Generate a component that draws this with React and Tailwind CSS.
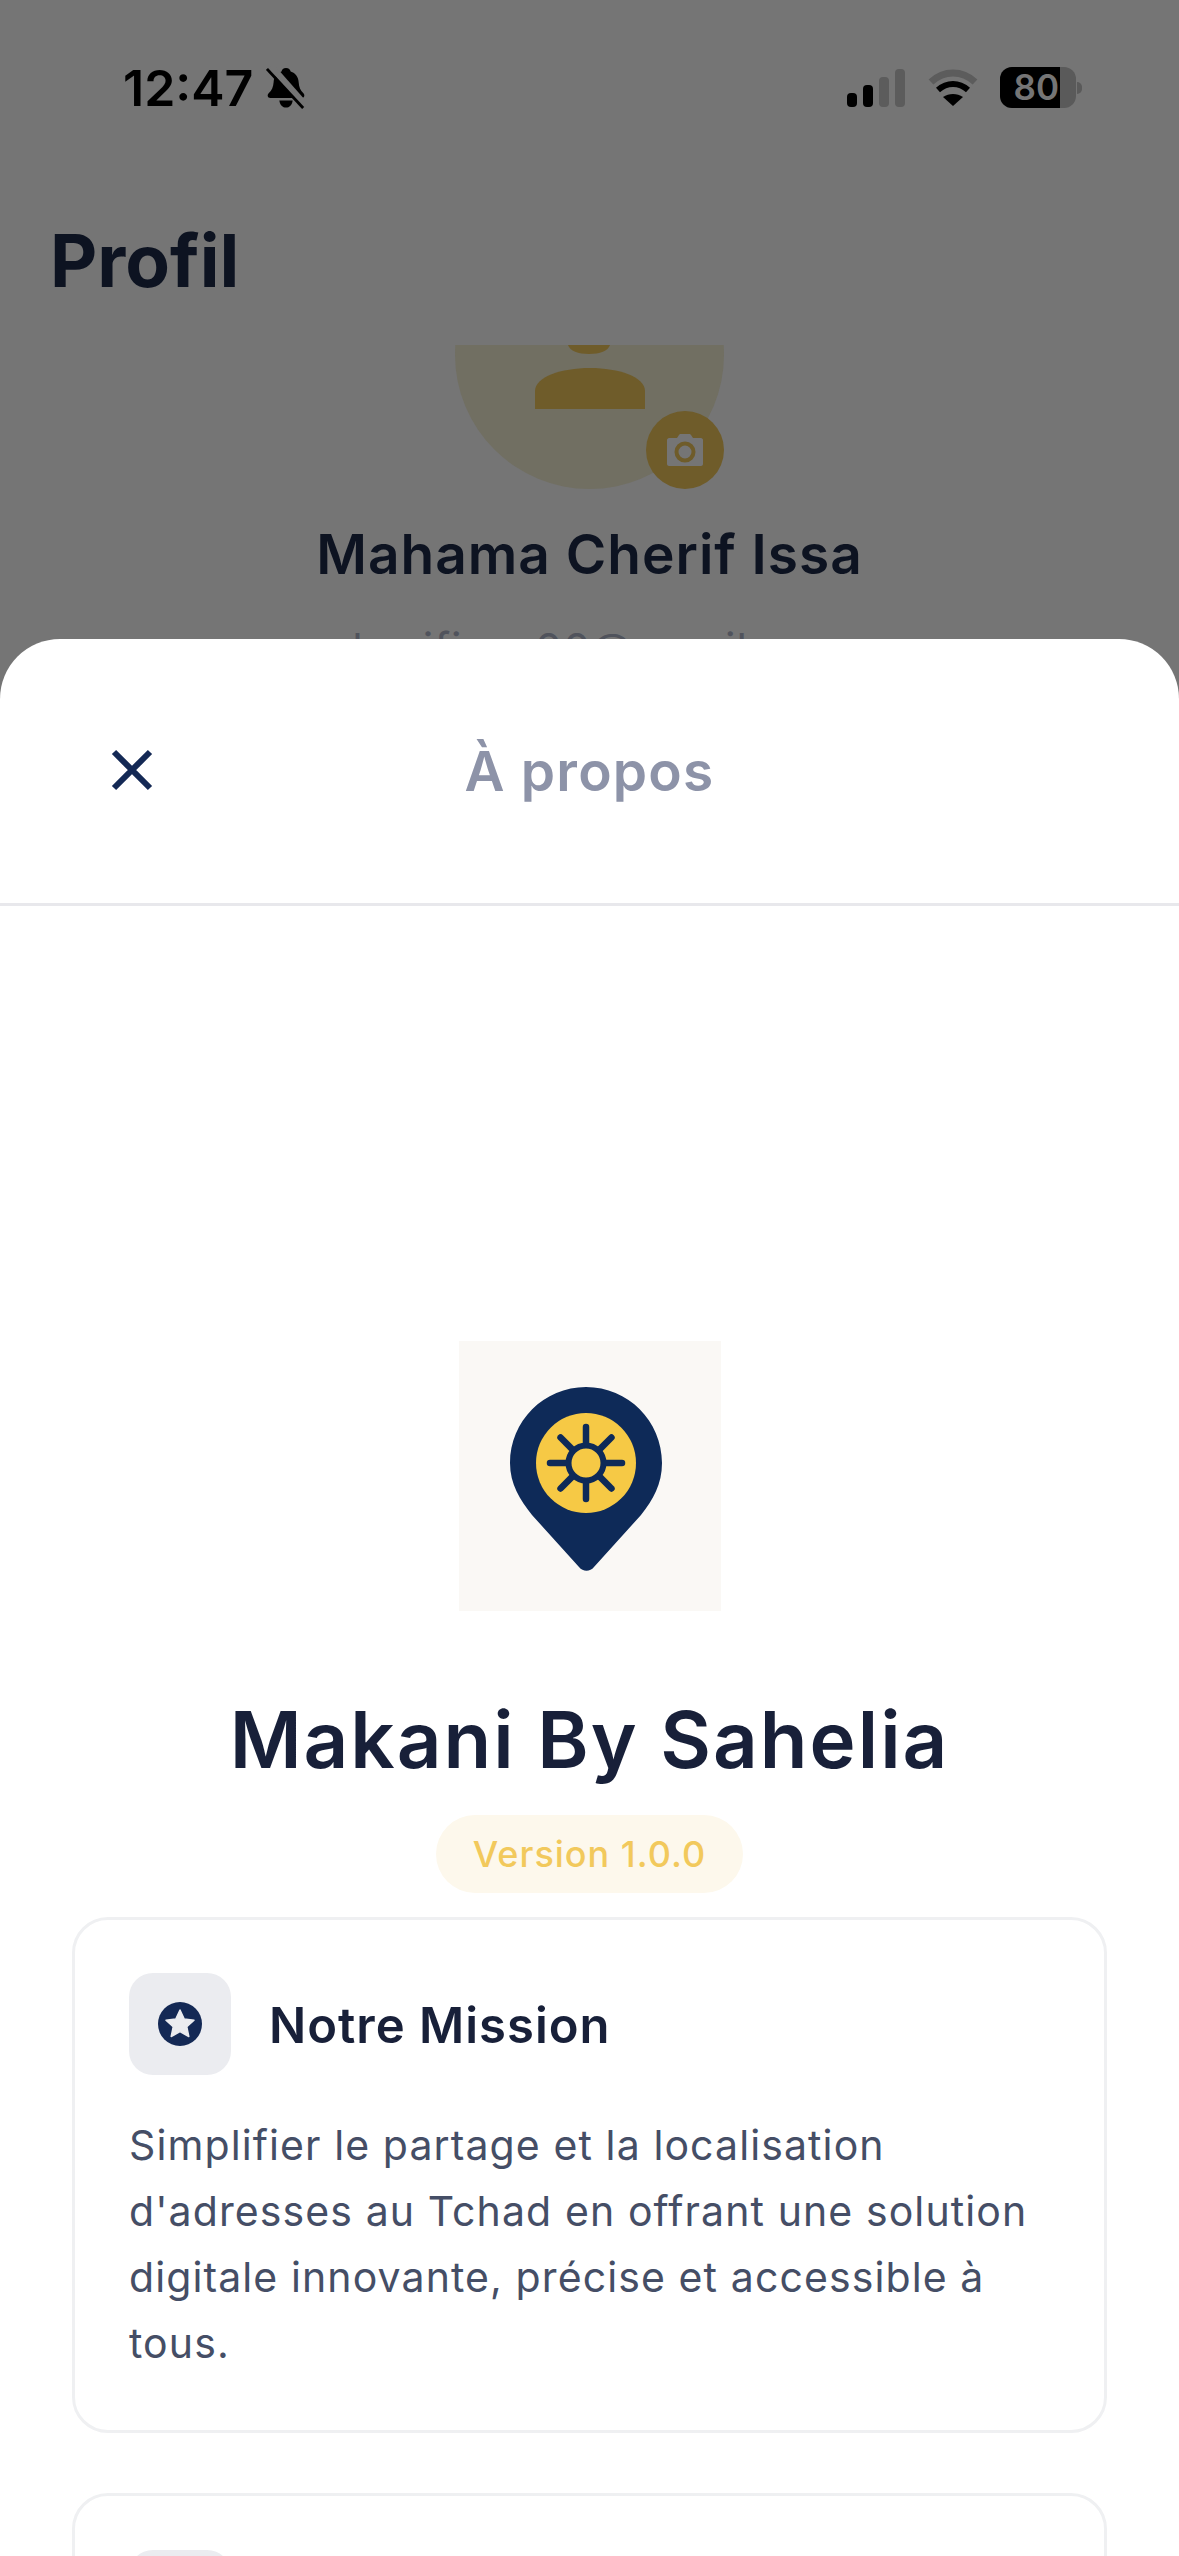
const FONT = { fontFamily: 'Inter, "Liberation Sans", sans-serif' };

function BellOff() {
  return (
    <svg width="40" height="44" viewBox="0 0 42 44" className="shrink-0">
      <path d="M21 1c2.800 0 4.500 1.800 4.900 3.800 5.200 1.600 8 5.800 8.400 11.200.3 5 1.700 8.600 5 11.400 1.800 1.600 1 5-1.700 5H4.500c-2.800 0-3.600-3.400-1.700-5 3.400-2.800 4.800-6.400 5.200-11.400.4-5.400 3.200-9.600 8.300-11.200C16.600 2.800 18.200 1 21 1z" fill="#000" />
      <path d="M14 35h14c-.5 4.500-3.500 7.500-7 7.500S14.500 39.500 14 35z" fill="#000" />
      <path d="M5 -1l37 42" stroke="#757575" strokeWidth="7" />
      <path d="M1 2l38 41" stroke="#000" strokeWidth="3" />
    </svg>
  );
}

function StatusIcons() {
  return (
    <div className="flex items-center pt-[7px]">
      <svg width="58" height="38" viewBox="0 0 58 38">
        <rect x="0" y="24" width="10" height="14" rx="4" fill="#000" />
        <rect x="16" y="16" width="10" height="22" rx="4" fill="#000" />
        <rect x="32" y="8" width="10" height="30" rx="4" fill="#5c5c5c" />
        <rect x="48" y="0" width="10" height="38" rx="4" fill="#5c5c5c" />
      </svg>
      <svg width="50" height="38" viewBox="0 0 50 38" className="ml-[23px]">
        <path d="M3 13C16 1 34 1 47 13" fill="none" stroke="#5c5c5c" strokeWidth="7" />
        <path d="M10 21c9-8 21-8 30 0" fill="none" stroke="#000" strokeWidth="6" />
        <path d="M25 37l-10-9c6-4 14-4 20 0z" fill="#000" />
      </svg>
      <div className="ml-[22px] flex items-center">
        <div className="flex h-[41px] w-[76px] items-center overflow-hidden rounded-[12px] bg-[#5a5a5a]">
          <div className="flex h-full w-[60px] items-center justify-end bg-black pr-px text-[35px] font-semibold text-[#757575]">80</div>
        </div>
        <div className="ml-px h-[12px] w-[5px] rounded-r-full bg-[#5a5a5a]" />
      </div>
    </div>
  );
}

function ProfileBehind() {
  return (
    <div className="h-full overflow-hidden bg-[#757575]">
      <div className="flex h-[125px] items-start justify-between pl-[123px] pr-[97px] pt-[60px]">
        <div className="flex items-center gap-[13px]">
          <span className="text-[50px] leading-[56px] font-semibold text-black">12:47</span>
          <BellOff />
        </div>
        <StatusIcons />
      </div>
      <div className="h-[220px] overflow-hidden">
        <h1 className="pl-[50px] pt-[97px] text-[73px] leading-[78px] font-bold text-[#0d1321]">Profil</h1>
      </div>
      <div className="flex justify-center">
        <div className="relative h-[144px] w-[269px] overflow-hidden">
          <div className="absolute bottom-0 left-0 h-[269px] w-[269px] rounded-full bg-[#716f62]" />
          <svg width="110" height="64" viewBox="0 0 110 64" className="absolute left-[80px] top-0">
            <path d="M33 0h42c-2 6-10 9-21 9S35 6 33 0z" fill="#6f5c2a" />
            <path d="M0 64V46c0-14 26-23 55-23s55 9 55 23v18z" fill="#6f5c2a" />
          </svg>
          <div className="absolute bottom-0 right-0 flex h-[78px] w-[78px] items-center justify-center rounded-full bg-[#6f5c2a]">
            <svg width="36" height="32" viewBox="0 0 36 32">
              <path d="M2 4h8l2-3c.500-.700 1-1 2-1h8c1 0 1.500.300 2 1l2 3h8c1 0 2 1 2 2v24c0 1-1 2-2 2H2c-1 0-2-1-2-2V6c0-1 1-2 2-2z" fill="#757575" />
              <circle cx="18" cy="18" r="8.500" fill="none" stroke="#6f5c2a" strokeWidth="4" />
            </svg>
          </div>
        </div>
      </div>
      <div className="mt-[34px] text-center text-[55px] leading-[62px] font-semibold tracking-[1px] text-[#0d1321]">Mahama Cherif Issa</div>
      <div className="mt-[38px] text-center text-[43px] leading-[50px] tracking-[1px] text-[#50535c]">cherifissa00@gmail.com</div>
    </div>
  );
}

function MakaniLogo() {
  const rays = [0, 45, 90, 135, 180, 225, 270, 315];
  return (
    <div className="flex h-[270px] w-[262px] items-center justify-center bg-[#faf8f5]">
      <svg width="262" height="270" viewBox="0 0 262 270">
        <path d="M127 46c42 0 76 34 76 76 0 21-9 37-21 52l-47 52c-4 5-11 5-15 0l-47-52c-12-15-22-31-22-52 0-42 34-76 76-76z" fill="#0e2a58" />
        <circle cx="127" cy="122" r="50" fill="#f6c945" />
        <circle cx="127" cy="122" r="17.500" fill="none" stroke="#0e2a58" strokeWidth="6" />
        {rays.map((r) => (
          <line key={r} x1="127" y1="102" x2="127" y2="86" stroke="#0e2a58" strokeWidth="6.500" strokeLinecap="round" transform={`rotate(${r} 127 122)`} />
        ))}
      </svg>
    </div>
  );
}

function InfoCard() {
  return (
    <div className="rounded-[36px] border-[3px] border-[#eff0f2] pb-[54px] pl-[54px] pr-[40px] pt-[53px]">
      <div className="flex items-center gap-[38px]">
        <div className="flex h-[102px] w-[102px] items-center justify-center rounded-[24px] bg-[#ebecf0]">
          <svg width="44" height="44" viewBox="0 0 44 44">
            <circle cx="22" cy="22" r="22" fill="#142955" />
            <path d="M22 8l4.200 9 9.800 1.200-7.200 6.600 2 9.700L22 29.600l-8.800 4.900 2-9.700L8 18.200l9.800-1.200z" fill="#ebecf0" strokeLinejoin="round" stroke="#ebecf0" strokeWidth="1.500" />
          </svg>
        </div>
        <h2 className="pt-[4px] text-[49px] leading-[56px] font-semibold tracking-[1px] text-[#182039]">Notre Mission</h2>
      </div>
      <p className="mt-[37px] text-[41px] leading-[66px] tracking-[1.100px] text-[#454e66]">
        Simplifier le partage et la localisation d'adresses au Tchad en offrant une solution digitale innovante, précise et accessible à tous.
      </p>
    </div>
  );
}

export default function App() {
  return (
    <div className="relative h-[2556px] overflow-hidden bg-white" style={FONT}>
      <ProfileBehind />
      {/* bottom sheet */}
      <div className="absolute inset-x-0 bottom-0 top-[639px] rounded-t-[60px] bg-white">
        <div className="relative flex h-[267px] items-center justify-center border-b-[3px] border-[#e8e8ec]">
          <svg width="42" height="42" viewBox="0 0 42 42" className="absolute left-[111px] top-[110px]">
            <path d="M3 3l36 36M39 3L3 39" stroke="#142955" strokeWidth="6" fill="none" />
          </svg>
          <span className="text-[55px] font-semibold tracking-[1.200px] text-[#8d93a8]">À propos</span>
        </div>
        <div className="flex flex-col items-center pt-[435px]">
          <MakaniLogo />
          <h1 className="mt-[84px] text-[78px] leading-[90px] font-semibold tracking-[2px] text-[#182039]">Makani By Sahelia</h1>
          <div className="mt-[30px] flex h-[78px] w-[307px] items-center justify-center rounded-full bg-[#fdf8ec] text-[36px] font-medium tracking-[1px] text-[#f2c95c]">Version 1.0.0</div>
        </div>
        <div className="flex flex-col gap-[60px] px-[72px] pt-[24px]">
          <InfoCard />
          <div className="rounded-[36px] border-[3px] border-[#eff0f2] px-[54px] pt-[54px]">
            <div className="h-[102px] w-[102px] rounded-[24px] bg-[#ebecf0]" />
          </div>
        </div>
      </div>
    </div>
  );
}
